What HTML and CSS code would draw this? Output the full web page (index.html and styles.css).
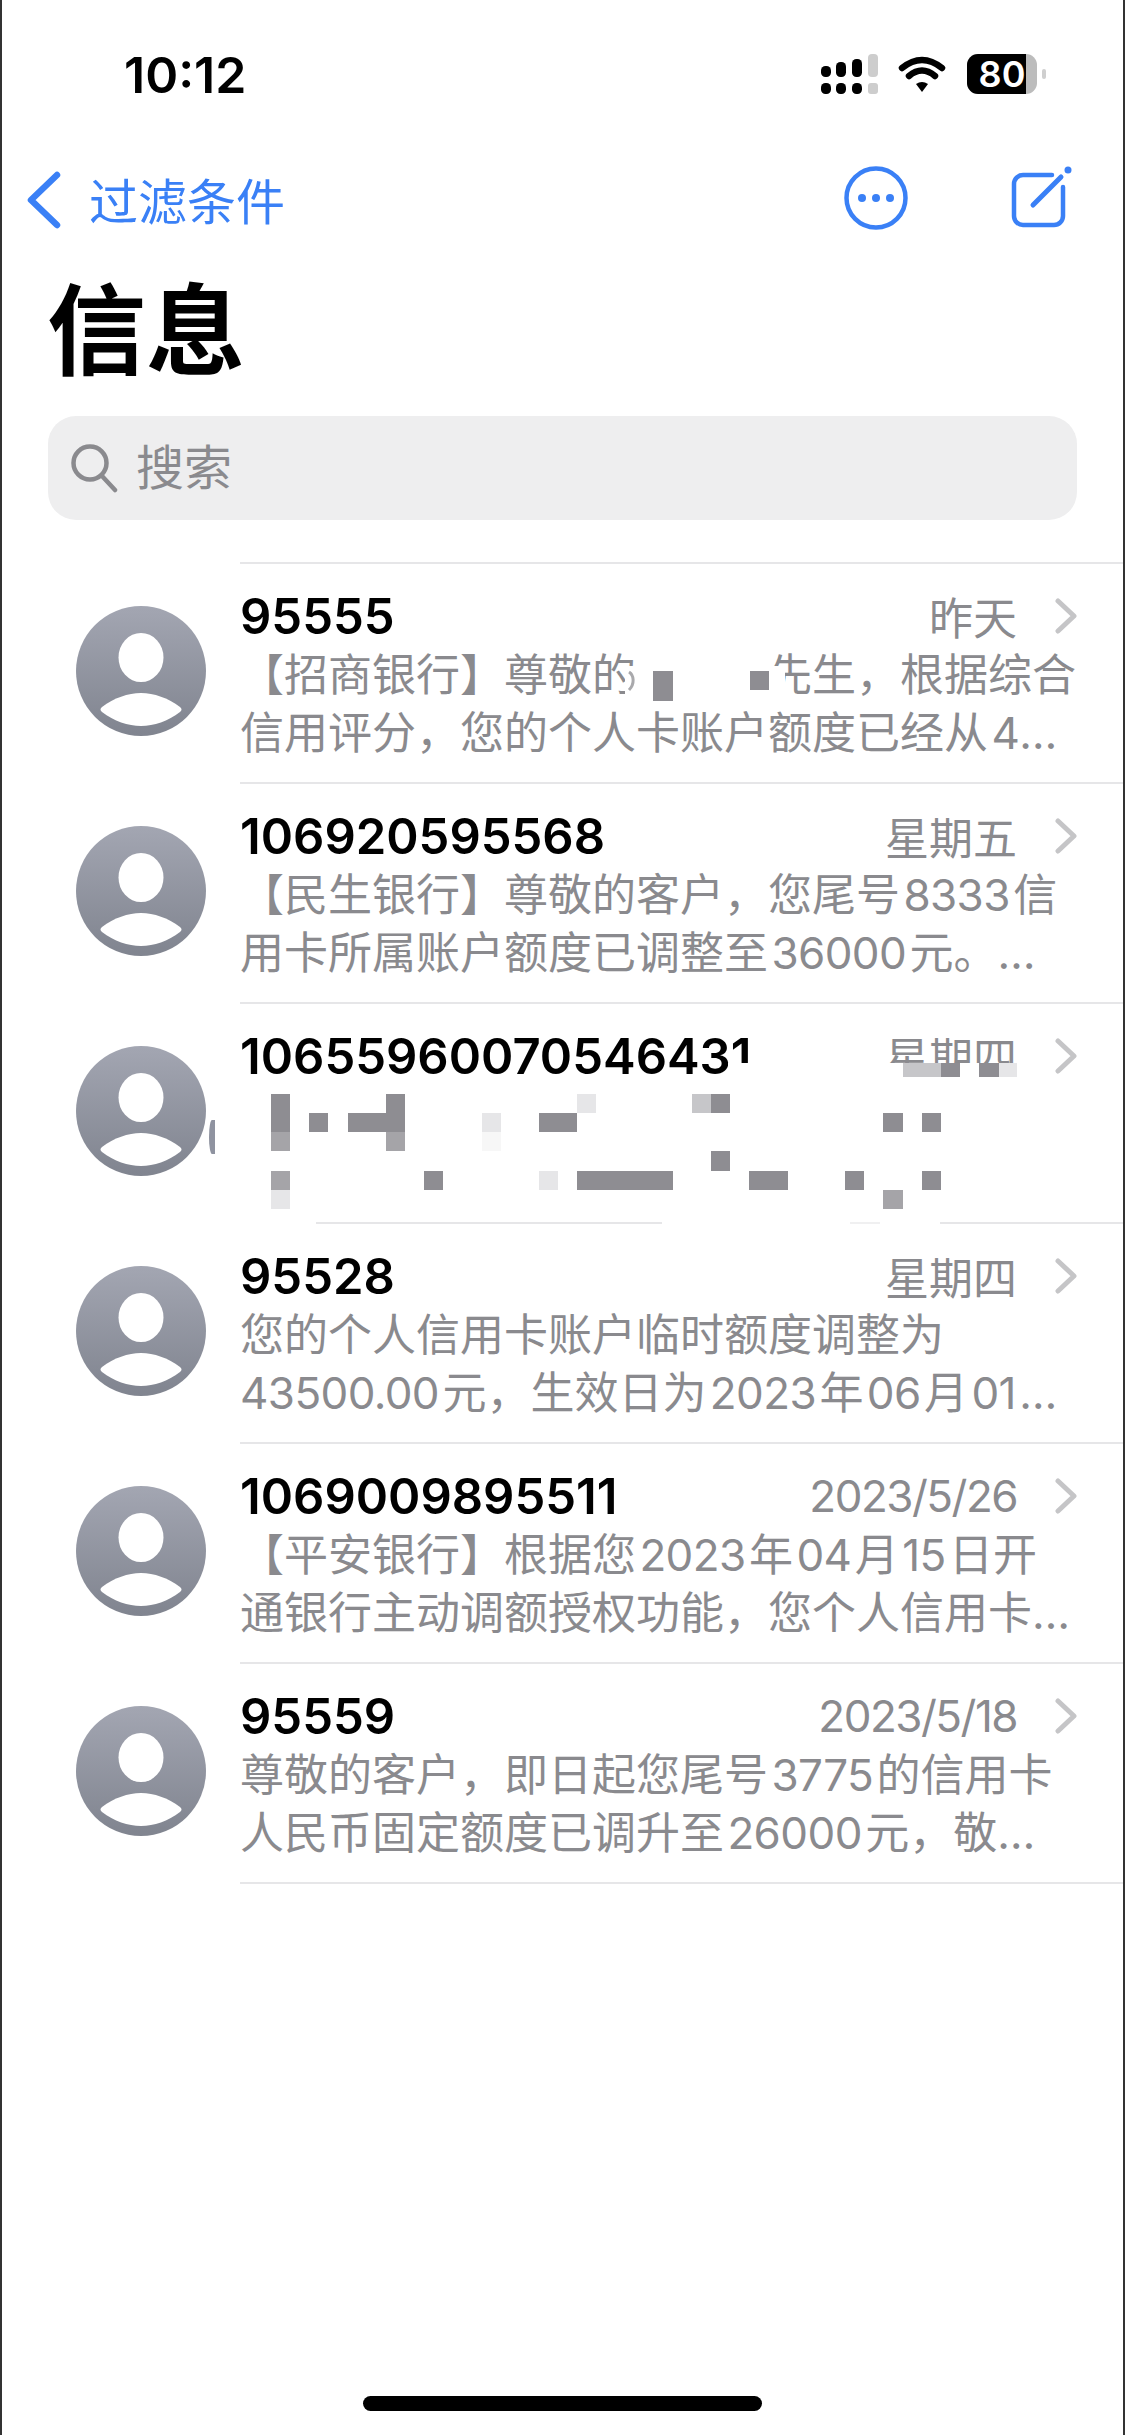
FILE: index.html
```html
<!DOCTYPE html>
<html lang="zh-CN">
<head>
<meta charset="utf-8">
<title>信息</title>
<link rel="stylesheet" href="styles.css">
</head>
<body>
<svg class="sprite" width="0" height="0" aria-hidden="true">
  <defs>
    <linearGradient id="avatar-fill" x1="0" y1="0" x2="0" y2="1">
      <stop offset="0" stop-color="#a3a6b2"/>
      <stop offset="1" stop-color="#80848f"/>
    </linearGradient>
    <symbol id="avatar" viewBox="0 0 130 130">
      <circle cx="65" cy="65" r="65" fill="url(#avatar-fill)"/>
      <ellipse cx="65" cy="51.5" rx="22.5" ry="24.5" fill="#fff"/>
      <path d="M26 101C38 92 52 87 65 87C78 87 92 92 104 101C106 103 106 104 104 106C92 115 78 120 65 120C52 120 38 115 26 106C24 104 24 103 26 101Z" fill="#fff"/>
    </symbol>
    <symbol id="chevron" viewBox="0 0 22 36">
      <path d="M3 3L19 18L3 33" fill="none" stroke="#c5c5c7" stroke-width="5" stroke-linecap="round" stroke-linejoin="round"/>
    </symbol>
  </defs>
</svg>
<div class="page">
  <header class="status">
    <span class="time">10:12</span>
    <svg class="status-icons" width="226" height="42" viewBox="0 0 226 42">
      <g class="ink">
        <rect x="0" y="13" width="10" height="11" rx="4.5"/>
        <rect x="15" y="9" width="10" height="15" rx="4.5"/>
        <rect x="31" y="6" width="10" height="18" rx="4.5"/>
        <rect x="0" y="30" width="10" height="11" rx="4.5"/>
        <rect x="15" y="30" width="10" height="11" rx="4.5"/>
        <rect x="31" y="30" width="10" height="11" rx="4.5"/>
      </g>
      <g class="ink-off">
        <rect x="47" y="1" width="10" height="23" rx="4"/>
        <rect x="47" y="30" width="10" height="11" rx="3"/>
      </g>
      <path class="wifi" d="M81 15Q101 -1 121 15"/>
      <path class="wifi" d="M88 23Q101 12 114 23"/>
      <path class="ink" d="M95 31Q101 27 107 31L101 39Z"/>
      <rect class="batt-off" x="146" y="1" width="70" height="40" rx="11"/>
      <path class="ink" d="M157 1H205V41H157A11 11 0 0 1 146 30V12A11 11 0 0 1 157 1Z"/>
      <rect class="batt-tip" x="221" y="16" width="4" height="10" rx="2"/>
      <text class="batt-text" x="181" y="34" text-anchor="middle">80</text>
    </svg>
  </header>

  <nav class="nav">
    <div class="nav-back">
      <svg class="nav-chevron" width="36" height="60" viewBox="0 0 36 60">
        <path d="M31 6L5 31L31 56"/>
      </svg>
      <span>过滤条件</span>
    </div>
    <div class="nav-actions">
      <svg class="nav-icon" width="64" height="64" viewBox="0 0 64 64">
        <circle cx="32" cy="32" r="29.5"/>
        <circle class="dot" cx="18" cy="32" r="4"/>
        <circle class="dot" cx="32" cy="32" r="4"/>
        <circle class="dot" cx="46" cy="32" r="4"/>
      </svg>
      <svg class="nav-icon" width="66" height="68" viewBox="0 0 66 68">
        <path d="M44 11H15A9 9 0 0 0 6 20V52A9 9 0 0 0 15 61H46A9 9 0 0 0 55 52V23"/>
        <path class="pen" d="M25 41L53 13"/>
        <circle class="dot" cx="60" cy="6" r="3.5"/>
      </svg>
    </div>
  </nav>

  <h1 class="title">信息</h1>

  <div class="search">
    <svg class="search-icon" width="50" height="50" viewBox="0 0 50 50">
      <circle cx="20" cy="20" r="16.5"/>
      <path d="M32 33L45 47"/>
    </svg>
    <span class="search-label">搜索</span>
  </div>

  <main class="list">
    <article class="row">
      <svg class="avatar" width="130" height="130"><use href="#avatar"/></svg>
      <div class="row-main">
        <div class="row-head">
          <span class="name">95555</span>
          <span class="meta"><span class="date">昨天</span><svg class="chev" width="22" height="36"><use href="#chevron"/></svg></span>
        </div>
        <div class="preview">
          <div class="line">【招商银行】尊敬的<span class="redact"><svg class="redact-art" width="160" height="40" viewBox="0 0 160 40"><rect class="m-white" x="0" y="0" width="160" height="40"/><path class="redact-frag" d="M4 6C9 9 10 18 4 24"/><rect class="m-dark" x="28" y="5" width="20" height="30"/><rect class="m-dark" x="125" y="5" width="19" height="19"/></svg></span>先生，根据综合</div>
          <div class="line">信用评分，您的个人卡账户额度已经从<span class="num num--last">4</span>…</div>
        </div>
      </div>
    </article>

    <article class="row">
      <svg class="avatar" width="130" height="130"><use href="#avatar"/></svg>
      <div class="row-main">
        <div class="row-head">
          <span class="name">106920595568</span>
          <span class="meta"><span class="date">星期五</span><svg class="chev" width="22" height="36"><use href="#chevron"/></svg></span>
        </div>
        <div class="preview">
          <div class="line">【民生银行】尊敬的客户，您尾号<span class="num">8333</span>信</div>
          <div class="line">用卡所属账户额度已调整至<span class="num">36000</span>元。…</div>
        </div>
      </div>
    </article>

    <article class="row">
      <svg class="avatar" width="130" height="130"><use href="#avatar"/></svg>
      <span class="sliver"></span>
      <div class="row-main">
        <div class="row-head">
          <span class="name">10655960070546431</span>
          <span class="meta"><span class="date">星期四</span><svg class="chev" width="22" height="36"><use href="#chevron"/></svg></span>
        </div>
        <span class="digit-mask"></span>
        <svg class="date-mask" width="145" height="30" viewBox="0 0 145 30">
          <rect class="m-white" width="145" height="30"/>
          <rect class="m-light" x="18" y="0" width="38" height="14"/>
          <rect class="m-dark" x="56" y="0" width="19" height="14"/>
          <rect class="m-dark" x="94" y="0" width="20" height="14"/>
          <rect class="m-faint" x="114" y="0" width="18" height="14"/>
        </svg>
        <svg class="mosaic" width="691" height="134" viewBox="0 0 36 7" shape-rendering="crispEdges">
          <g class="m-dark">
            <rect x="0" y="0" width="1" height="2"/>
            <rect x="2" y="1" width="1" height="1"/>
            <rect x="4" y="1" width="2" height="1"/>
            <rect x="6" y="0" width="1" height="2"/>
            <rect x="14" y="1" width="2" height="1"/>
            <rect x="23" y="0" width="1" height="1"/>
            <rect x="32" y="1" width="1" height="1"/>
            <rect x="34" y="1" width="1" height="1"/>
            <rect x="23" y="3" width="1" height="1"/>
            <rect x="8" y="4" width="1" height="1"/>
            <rect x="16" y="4" width="5" height="1"/>
            <rect x="25" y="4" width="2" height="1"/>
            <rect x="30" y="4" width="1" height="1"/>
            <rect x="34" y="4" width="1" height="1"/>
          </g>
          <g class="m-mid">
            <rect x="0" y="2" width="1" height="1"/>
            <rect x="6" y="2" width="1" height="1"/>
            <rect x="0" y="4" width="1" height="1"/>
            <rect x="32" y="5" width="1" height="1"/>
          </g>
          <rect class="m-light" x="22" y="0" width="1" height="1"/>
          <g class="m-faint">
            <rect x="11" y="1" width="1" height="1"/>
            <rect x="16" y="0" width="1" height="1"/>
            <rect x="14" y="4" width="1" height="1"/>
            <rect x="0" y="5" width="1" height="1"/>
          </g>
          <rect class="m-pale" x="11" y="2" width="1" height="1"/>
        </svg>
      </div>
    </article>

    <article class="row">
      <svg class="avatar" width="130" height="130"><use href="#avatar"/></svg>
      <div class="row-main row-main--broken-rule">
        <div class="row-head">
          <span class="name">95528</span>
          <span class="meta"><span class="date">星期四</span><svg class="chev" width="22" height="36"><use href="#chevron"/></svg></span>
        </div>
        <div class="preview">
          <div class="line">您的个人信用卡账户临时额度调整为</div>
          <div class="line"><span class="num num--first">43500.00</span>元，生效日为<span class="num">2023</span>年<span class="num">06</span>月<span class="num">01</span>…</div>
        </div>
      </div>
    </article>

    <article class="row">
      <svg class="avatar" width="130" height="130"><use href="#avatar"/></svg>
      <div class="row-main">
        <div class="row-head">
          <span class="name">1069009895511</span>
          <span class="meta"><span class="date date--num">2023/5/26</span><svg class="chev" width="22" height="36"><use href="#chevron"/></svg></span>
        </div>
        <div class="preview">
          <div class="line">【平安银行】根据您<span class="num">2023</span>年<span class="num">04</span>月<span class="num">15</span>日开</div>
          <div class="line">通银行主动调额授权功能，您个人信用卡…</div>
        </div>
      </div>
    </article>

    <article class="row row--last">
      <svg class="avatar" width="130" height="130"><use href="#avatar"/></svg>
      <div class="row-main">
        <div class="row-head">
          <span class="name">95559</span>
          <span class="meta"><span class="date date--num">2023/5/18</span><svg class="chev" width="22" height="36"><use href="#chevron"/></svg></span>
        </div>
        <div class="preview">
          <div class="line">尊敬的客户，即日起您尾号<span class="num">3775</span>的信用卡</div>
          <div class="line">人民币固定额度已调升至<span class="num">26000</span>元，敬…</div>
        </div>
      </div>
    </article>
  </main>

  <div class="home-bar"></div>
</div>
</body>
</html>
```
FILE: styles.css
```css
* { box-sizing: border-box; }

html, body {
  margin: 0;
  padding: 0;
  background: #fff;
}

body {
  font-family: Inter, "Noto Sans CJK SC", sans-serif;
  color: #000;
}

.sprite {
  position: absolute;
}

.page {
  width: 1125px;
  height: 2435px;
  display: flex;
  flex-direction: column;
  border-left: 2px solid #333;
  border-right: 2px solid #333;
  overflow: hidden;
}

/* status bar */
.status {
  height: 150px;
  display: flex;
  align-items: center;
  justify-content: space-between;
  padding: 0 76px 0 122px;
}

.time {
  font-size: 50px;
  font-weight: 600;
}

.status-icons {
  margin-top: -2px;
}

.ink { fill: #000; }
.ink-off { fill: #cdcdcd; }
.wifi {
  fill: none;
  stroke: #000;
  stroke-width: 6.5;
  stroke-linecap: round;
}
.batt-off { fill: #bcbcbc; }
.batt-tip { fill: #cfcfcf; }
.batt-text {
  fill: #fff;
  font-size: 36px;
  font-weight: 600;
}

/* navigation */
.nav {
  height: 96px;
  display: flex;
  align-items: center;
  justify-content: space-between;
  padding: 0 49px 0 24px;
  color: #3a80f6;
  font-size: 49px;
}

.nav-back {
  display: flex;
  align-items: center;
  gap: 27px;
}

.nav-chevron {
  margin-top: 2px;
}

.nav-chevron path {
  fill: none;
  stroke: #3a80f6;
  stroke-width: 6.5;
  stroke-linecap: round;
  stroke-linejoin: round;
}

.nav-actions {
  display: flex;
  align-items: center;
  gap: 100px;
}

.nav-icon {
  fill: none;
  stroke: #3a80f6;
  stroke-width: 4.5;
  stroke-linecap: round;
}

.nav-icon .dot {
  fill: #3a80f6;
  stroke: none;
}

.nav-icon .pen {
  stroke-width: 5;
}

/* large title */
.title {
  height: 170px;
  margin: 0;
  padding-left: 45px;
  font-size: 99px;
  font-weight: 700;
  line-height: 170px;
}

/* search */
.search {
  height: 104px;
  margin: 0 46px 42px;
  padding-left: 22px;
  display: flex;
  align-items: center;
  gap: 16px;
  border-radius: 28px;
  background: #eeeeef;
  color: #8a8a8e;
  font-size: 48px;
}

.search-label {
  margin-top: -8px;
}

.search-icon {
  fill: none;
  stroke: #8a8a8e;
  stroke-width: 4.5;
  stroke-linecap: round;
}

/* list */
.list {
  display: flex;
  flex-direction: column;
}

.row {
  position: relative;
  height: 220px;
  display: flex;
}

.avatar {
  flex: none;
  width: 130px;
  height: 130px;
  margin: 44px 34px 0 74px;
}

.sliver {
  position: absolute;
  left: 207px;
  top: 118px;
  width: 6px;
  height: 34px;
  border-radius: 100% 0 0 100%;
  background: #8f93a0;
}

.row-main {
  position: relative;
  flex: 1;
  min-width: 0;
  border-top: 2px solid #e6e6e8;
}

.row--last .row-main {
  border-bottom: 2px solid #e6e6e8;
  height: 222px;
}

.row-main--broken-rule {
  border-top-color: transparent;
  background-origin: border-box;
  background-clip: border-box;
  background-repeat: no-repeat;
  background-size: 100% 2px;
  background-image: linear-gradient(90deg,
    transparent 76px,
    #e6e6e8 76px 422px,
    transparent 422px 610px,
    #f0f0f1 610px 640px,
    transparent 640px 700px,
    #e6e6e8 700px);
}

.row-head {
  height: 60px;
  margin-top: 22px;
  padding-right: 46px;
  display: flex;
  align-items: center;
  justify-content: space-between;
}

.name {
  font-size: 49px;
  font-weight: 600;
}

.meta {
  display: flex;
  align-items: center;
  gap: 38px;
  color: #8a8a8e;
  font-size: 44px;
}

.date--num {
  letter-spacing: -1.5px;
}

.chev {
  display: block;
}

.preview {
  color: #8a8a8e;
  font-size: 44px;
  line-height: 58px;
}

.line {
  white-space: nowrap;
}

.num {
  margin: 0 3.4px;
  letter-spacing: -0.6px;
}

.num--first {
  margin-left: 0;
}

.num--last {
  margin-right: 0;
}

/* redactions in the source image */
.redact {
  position: relative;
  z-index: 1;
  display: inline-block;
  width: 132px;
  height: 58px;
  vertical-align: top;
}

.redact-art {
  position: absolute;
  left: -11px;
  top: 20px;
}

.redact-frag {
  fill: none;
  stroke: #a9a9ac;
  stroke-width: 3;
}

.mosaic {
  display: block;
  margin: 8px 0 0 30px;
}

.digit-mask {
  position: absolute;
  left: 488px;
  top: 59px;
  width: 26px;
  height: 14px;
  background: #fff;
}

.date-mask {
  position: absolute;
  left: 645px;
  top: 59px;
}

.m-white { fill: #fff; }
.m-dark { fill: #8e8d92; }
.m-mid { fill: #a5a4a8; }
.m-light { fill: #c6c6c9; }
.m-faint { fill: #e6e6e8; }
.m-pale { fill: #f7f7f7; }

/* home indicator */
.home-bar {
  flex: none;
  width: 399px;
  height: 15px;
  margin: auto 0 24px 361px;
  border-radius: 8px;
  background: #000;
}
```
